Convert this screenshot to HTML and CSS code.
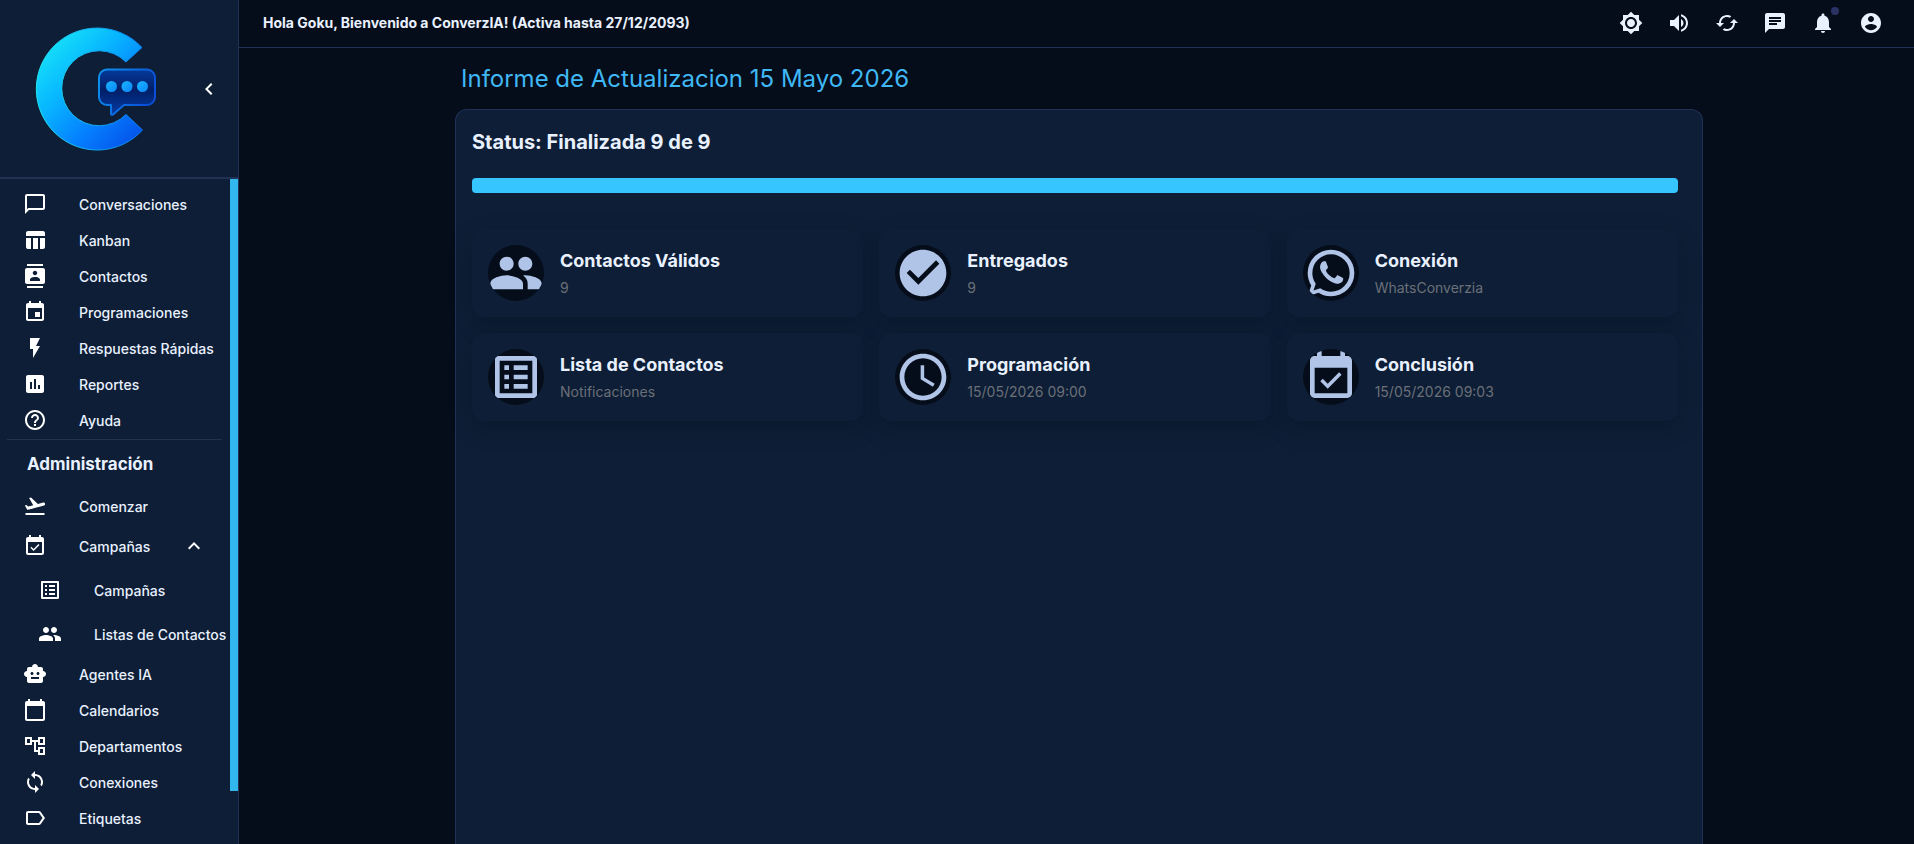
FILE: index.html
```html
<!DOCTYPE html>
<html lang="es">
<head>
    <meta charset="UTF-8">
    <meta name="viewport" content="width=device-width, initial-scale=1.0">
    <title>ConverzIA - Informe</title>
    <link rel="stylesheet" href="styles.css">
</head>
<body>
    <div class="layout">
        <aside class="sidebar">
            <div class="brand">
                <svg class="logo" viewBox="0 0 120 126" role="img" aria-label="ConverzIA">
                    <defs>
                        <linearGradient id="ring" x1="0" y1="0" x2="0.9" y2="1">
                            <stop offset="0" stop-color="#1cf3f5"/>
                            <stop offset="0.4" stop-color="#08b8ff"/>
                            <stop offset="0.7" stop-color="#0580ff"/>
                            <stop offset="1" stop-color="#0450e8"/>
                        </linearGradient>
                        <linearGradient id="edge" x1="0" y1="0" x2="1" y2="0">
                            <stop offset="0" stop-color="#1fe8ee"/>
                            <stop offset="1" stop-color="#0a78f0"/>
                        </linearGradient>
                        <linearGradient id="bubbleEdge" x1="0" y1="0" x2="1" y2="0.4">
                            <stop offset="0" stop-color="#0d96f0"/>
                            <stop offset="1" stop-color="#0a4fd8"/>
                        </linearGradient>
                        <linearGradient id="bubble" x1="0" y1="0" x2="0" y2="1">
                            <stop offset="0" stop-color="#053a9c"/>
                            <stop offset="0.45" stop-color="#021f66"/>
                            <stop offset="1" stop-color="#043ba6"/>
                        </linearGradient>
                        <linearGradient id="dot" x1="0" y1="0" x2="1" y2="1">
                            <stop offset="0" stop-color="#1ab6ff"/>
                            <stop offset="1" stop-color="#0a86fa"/>
                        </linearGradient>
                    </defs>
                    <path fill="url(#ring)" stroke="url(#edge)" stroke-width="1" stroke-linejoin="round" d="M104 21.500A61 61 0 1 0 104.500 104L88 88.500A37.500 37.500 0 1 1 88 36Z"/>
                    <path fill="url(#bubble)" stroke="url(#bubbleEdge)" stroke-width="2" stroke-linejoin="round" d="M69 43.500H109a8 8 0 0 1 8 8V71a8 8 0 0 1-8 8H86L75 88.500q-2 1-2-1V79H69a8 8 0 0 1-8-8V51.500a8 8 0 0 1 8-8Z"/>
                    <circle fill="url(#dot)" cx="73.500" cy="60.500" r="5.500"/>
                    <circle fill="url(#dot)" cx="89" cy="60.500" r="5.500"/>
                    <circle fill="url(#dot)" cx="104.500" cy="60.500" r="5.500"/>
                </svg>
                <button class="icon-button" type="button" aria-label="Contraer menú">
                    <svg class="icon" viewBox="0 0 24 24"><path d="M15.410 7.410 14 6l-6 6 6 6 1.410-1.410L10.830 12z"/></svg>
                </button>
            </div>

            <div class="menu-wrap">
            <nav class="menu">
                <a class="menu-item" href="#">
                    <svg class="icon" viewBox="0 0 24 24"><path d="M20 2H4c-1.100 0-2 .9-2 2v18l4-4h14c1.100 0 2-.9 2-2V4c0-1.100-.9-2-2-2m0 14H5.170L4 17.170V4h16z"/></svg>
                    <span>Conversaciones</span>
                </a>
                <a class="menu-item" href="#">
                    <svg class="icon" viewBox="0 0 24 24"><path d="M10 10.020h5V21h-5zM17 21h3c1.100 0 2-.9 2-2v-9h-5zm3-18H5c-1.100 0-2 .9-2 2v3h19V5c0-1.100-.9-2-2-2M3 19c0 1.100.9 2 2 2h3V10H3z"/></svg>
                    <span>Kanban</span>
                </a>
                <a class="menu-item" href="#">
                    <svg class="icon" viewBox="0 0 24 24"><path d="M20 0H4v2h16zM4 24h16v-2H4zM20 4H4c-1.100 0-2 .9-2 2v12c0 1.100.9 2 2 2h16c1.100 0 2-.9 2-2V6c0-1.100-.9-2-2-2m-8 2.750c1.240 0 2.250 1.010 2.250 2.250s-1.010 2.250-2.250 2.250S9.750 10.240 9.750 9 10.760 6.750 12 6.750M17 17H7v-1.500c0-1.670 3.330-2.500 5-2.500s5 .83 5 2.500z"/></svg>
                    <span>Contactos</span>
                </a>
                <a class="menu-item" href="#">
                    <svg class="icon" viewBox="0 0 24 24"><path d="M17 12h-5v5h5zM16 1v2H8V1H6v2H5c-1.110 0-1.990.9-1.990 2L3 19c0 1.100.89 2 2 2h14c1.100 0 2-.9 2-2V5c0-1.100-.9-2-2-2h-1V1zm3 18H5V8h14z"/></svg>
                    <span>Programaciones</span>
                </a>
                <a class="menu-item" href="#">
                    <svg class="icon" viewBox="0 0 24 24"><path d="M7 2v11h3v9l7-12h-4l4-8z"/></svg>
                    <span>Respuestas Rápidas</span>
                </a>
                <a class="menu-item" href="#">
                    <svg class="icon" viewBox="0 0 24 24"><path d="M19 3H5c-1.100 0-2 .9-2 2v14c0 1.100.9 2 2 2h14c1.100 0 2-.9 2-2V5c0-1.100-.9-2-2-2M9 17H7v-7h2zm4 0h-2V7h2zm4 0h-2v-4h2z"/></svg>
                    <span>Reportes</span>
                </a>
                <a class="menu-item" href="#">
                    <svg class="icon" viewBox="0 0 24 24"><path d="M11 18h2v-2h-2zm1-16C6.480 2 2 6.480 2 12s4.480 10 10 10 10-4.480 10-10S17.520 2 12 2m0 18c-4.410 0-8-3.590-8-8s3.590-8 8-8 8 3.590 8 8-3.590 8-8 8m0-14c-2.210 0-4 1.790-4 4h2c0-1.100.9-2 2-2s2 .9 2 2c0 2-3 1.750-3 5h2c0-2.250 3-2.500 3-5 0-2.210-1.790-4-4-4"/></svg>
                    <span>Ayuda</span>
                </a>

                <hr class="divider">
                <h2 class="menu-title">Administración</h2>

                <a class="menu-item" href="#">
                    <svg class="icon" viewBox="0 0 24 24"><path d="M2.500 19h19v2h-19zm19.570-9.360c-.21-.8-1.040-1.280-1.840-1.060L14.920 10l-6.900-6.430-1.930.51 4.140 7.170-4.970 1.330-1.970-1.540-1.450.39 2.590 4.490s7.120-1.900 16.570-4.430c.81-.23 1.280-1.050 1.070-1.850"/></svg>
                    <span>Comenzar</span>
                </a>
                <button class="menu-item tall" type="button" aria-expanded="true">
                    <svg class="icon" viewBox="0 0 24 24"><path d="M16.530 11.060 15.470 10l-4.880 4.880-2.120-2.120-1.060 1.060L10.590 17zM19 3h-1V1h-2v2H8V1H6v2H5c-1.110 0-1.990.9-1.990 2L3 19c0 1.100.89 2 2 2h14c1.100 0 2-.9 2-2V5c0-1.100-.9-2-2-2m0 16H5V8h14z"/></svg>
                    <span>Campañas</span>
                    <svg class="icon chevron" viewBox="0 0 24 24"><path d="m12 8-6 6 1.410 1.410L12 10.830l4.590 4.580L18 14z"/></svg>
                </button>
                <div class="submenu">
                    <a class="menu-item tall" href="#">
                        <svg class="icon" viewBox="0 0 24 24"><path d="M19 5v14H5V5zm1.100-2H3.900c-.5 0-.9.4-.9.9v16.200c0 .4.4.9.9.9h16.200c.4 0 .9-.5.9-.9V3.900c0-.5-.5-.9-.9-.9M11 7h6v2h-6zm0 4h6v2h-6zm0 4h6v2h-6zM7 7h2v2H7zm0 4h2v2H7zm0 4h2v2H7z"/></svg>
                        <span>Campañas</span>
                    </a>
                    <a class="menu-item tall" href="#">
                        <svg class="icon" viewBox="0 0 24 24"><path d="M16 11c1.660 0 2.990-1.340 2.990-3S17.660 5 16 5s-3 1.340-3 3 1.340 3 3 3m-8 0c1.660 0 2.990-1.340 2.990-3S9.660 5 8 5 5 6.340 5 8s1.340 3 3 3m0 2c-2.330 0-7 1.170-7 3.500V19h14v-2.500c0-2.330-4.670-3.500-7-3.500m8 0c-.29 0-.62.020-.97.050 1.160.84 1.970 1.970 1.970 3.450V19h6v-2.500c0-2.330-4.670-3.500-7-3.500"/></svg>
                        <span>Listas de Contactos</span>
                    </a>
                </div>
                <a class="menu-item" href="#">
                    <svg class="icon" viewBox="0 0 24 24"><path d="M20 9V7c0-1.100-.9-2-2-2h-3c0-1.660-1.340-3-3-3S9 3.340 9 5H6c-1.100 0-2 .9-2 2v2c-1.660 0-3 1.340-3 3s1.340 3 3 3v4c0 1.100.9 2 2 2h12c1.100 0 2-.9 2-2v-4c1.660 0 3-1.340 3-3s-1.340-3-3-3M7.500 11.500c0-.83.67-1.500 1.500-1.500s1.500.67 1.500 1.500S9.830 13 9 13s-1.500-.67-1.500-1.500M16 17H8v-2h8zm-1-4c-.83 0-1.500-.67-1.500-1.500S14.170 10 15 10s1.500.67 1.500 1.500S15.830 13 15 13"/></svg>
                    <span>Agentes IA</span>
                </a>
                <a class="menu-item" href="#">
                    <svg class="icon" viewBox="0 0 24 24"><path d="M20 3h-1V1h-2v2H7V1H5v2H4c-1.100 0-2 .9-2 2v16c0 1.100.9 2 2 2h16c1.100 0 2-.9 2-2V5c0-1.100-.9-2-2-2m0 18H4V8h16z"/></svg>
                    <span>Calendarios</span>
                </a>
                <a class="menu-item" href="#">
                    <svg class="icon" viewBox="0 0 24 24"><path d="M22 11V3h-7v3H9V3H2v8h7V8h2v10h4v3h7v-8h-7v3h-2V8h2v3zM7 9H4V5h3zm10 6h3v4h-3zm0-10h3v4h-3z"/></svg>
                    <span>Departamentos</span>
                </a>
                <a class="menu-item" href="#">
                    <svg class="icon" viewBox="0 0 24 24"><path d="M12 4V1L8 5l4 4V6c3.310 0 6 2.690 6 6 0 1.010-.25 1.970-.7 2.800l1.460 1.460C19.540 15.030 20 13.570 20 12c0-4.420-3.580-8-8-8m0 14c-3.310 0-6-2.690-6-6 0-1.010.25-1.970.7-2.800L5.240 7.740C4.460 8.970 4 10.430 4 12c0 4.420 3.580 8 8 8v3l4-4-4-4z"/></svg>
                    <span>Conexiones</span>
                </a>
                <a class="menu-item" href="#">
                    <svg class="icon" viewBox="0 0 24 24"><path d="M17.630 5.840C17.270 5.330 16.670 5 16 5L5 5.010C3.900 5.010 3 5.900 3 7v10c0 1.100.9 1.990 2 1.990L16 19c.67 0 1.270-.33 1.630-.84L22 12zM16 17H5V7h11l3.550 5z"/></svg>
                    <span>Etiquetas</span>
                </a>
            </nav>
            <div class="scroll-track"><div class="scroll-thumb"></div></div>
            </div>
        </aside>

        <div class="content">
            <header class="topbar">
                <p class="welcome">Hola Goku, Bienvenido a ConverzIA! (Activa hasta 27/12/2093)</p>
                <div class="actions">
                    <button class="icon-button" type="button" aria-label="Tema">
                        <svg class="icon" viewBox="0 0 24 24"><path d="M20 8.690V4h-4.690L12 .69 8.690 4H4v4.690L.69 12 4 15.310V20h4.690L12 23.310 15.310 20H20v-4.690L23.310 12zM12 18c-3.310 0-6-2.690-6-6s2.690-6 6-6 6 2.690 6 6-2.690 6-6 6m0-10c-2.210 0-4 1.790-4 4s1.790 4 4 4 4-1.790 4-4-1.790-4-4-4"/></svg>
                    </button>
                    <button class="icon-button" type="button" aria-label="Volumen">
                        <svg class="icon" viewBox="0 0 24 24"><path d="M3 9v6h4l5 5V4L7 9zm13.500 3c0-1.770-1.020-3.290-2.500-4.030v8.050c1.480-.73 2.500-2.250 2.500-4.020M14 3.230v2.060c2.890.86 5 3.540 5 6.710s-2.110 5.850-5 6.710v2.060c4.010-.91 7-4.490 7-8.770s-2.990-7.860-7-8.770"/></svg>
                    </button>
                    <button class="icon-button" type="button" aria-label="Actualizar">
                        <svg class="icon" viewBox="0 0 24 24"><path d="m19 8-4 4h3c0 3.310-2.690 6-6 6-1.010 0-1.970-.25-2.800-.7l-1.460 1.460C8.970 19.540 10.430 20 12 20c4.420 0 8-3.580 8-8h3zM6 12c0-3.310 2.690-6 6-6 1.010 0 1.970.25 2.800.7l1.460-1.460C15.030 4.460 13.570 4 12 4c-4.420 0-8 3.580-8 8H1l4 4 4-4z"/></svg>
                    </button>
                    <button class="icon-button" type="button" aria-label="Mensajes">
                        <svg class="icon" viewBox="0 0 24 24"><path d="M20 2H4c-1.100 0-1.990.9-1.990 2L2 22l4-4h14c1.100 0 2-.9 2-2V4c0-1.100-.9-2-2-2M6 9h12v2H6zm8 5H6v-2h8zm4-6H6V6h12z"/></svg>
                    </button>
                    <button class="icon-button" type="button" aria-label="Notificaciones">
                        <svg class="icon" viewBox="0 0 24 24"><path d="M12 22c1.100 0 2-.9 2-2h-4c0 1.100.89 2 2 2m6-6v-5c0-3.070-1.640-5.640-4.500-6.320V4c0-.83-.67-1.500-1.500-1.500s-1.500.67-1.500 1.500v.68C7.630 5.360 6 7.920 6 11v5l-2 2v1h16v-1z"/></svg>
                        <span class="badge"></span>
                    </button>
                    <button class="icon-button" type="button" aria-label="Cuenta">
                        <svg class="icon" viewBox="0 0 24 24"><path d="M12 2C6.480 2 2 6.480 2 12s4.480 10 10 10 10-4.480 10-10S17.520 2 12 2m0 3c1.660 0 3 1.340 3 3s-1.340 3-3 3-3-1.340-3-3 1.340-3 3-3m0 14.200c-2.500 0-4.710-1.280-6-3.220.030-1.990 4-3.080 6-3.080 1.990 0 5.970 1.090 6 3.080-1.290 1.940-3.500 3.220-6 3.220"/></svg>
                    </button>
                </div>
            </header>

            <main class="main">
                <div class="container">
                    <h1 class="page-title">Informe de Actualizacion 15 Mayo 2026</h1>
                    <section class="report">
                        <h2 class="status">Status: Finalizada 9 de 9</h2>
                        <progress class="progress" value="9" max="9" aria-label="Progreso"></progress>

                        <div class="cards">
                            <div class="card">
                                <svg class="avatar" viewBox="0 0 24 24"><path d="M16 11c1.660 0 2.990-1.340 2.990-3S17.660 5 16 5s-3 1.340-3 3 1.340 3 3 3m-8 0c1.660 0 2.990-1.340 2.990-3S9.660 5 8 5 5 6.340 5 8s1.340 3 3 3m0 2c-2.330 0-7 1.170-7 3.500V19h14v-2.500c0-2.330-4.670-3.500-7-3.500m8 0c-.29 0-.62.020-.97.050 1.160.84 1.970 1.970 1.970 3.450V19h6v-2.500c0-2.330-4.670-3.500-7-3.500"/></svg>
                                <div>
                                    <h3 class="card-title">Contactos Válidos</h3>
                                    <p class="card-text">9</p>
                                </div>
                            </div>
                            <div class="card">
                                <svg class="avatar" viewBox="0 0 24 24"><path d="M12 2C6.480 2 2 6.480 2 12s4.480 10 10 10 10-4.480 10-10S17.520 2 12 2m-2 15-5-5 1.410-1.410L10 14.170l7.590-7.590L19 8z"/></svg>
                                <div>
                                    <h3 class="card-title">Entregados</h3>
                                    <p class="card-text">9</p>
                                </div>
                            </div>
                            <div class="card">
                                <svg class="avatar" viewBox="0 0 24 24"><path d="M16.750 13.960c.25.130.41.200.46.300.060.110.040.610-.21 1.180-.2.560-1.240 1.100-1.700 1.120-.46.020-.47.360-2.960-.73-2.490-1.090-3.990-3.750-4.110-3.920-.12-.17-.96-1.380-.92-2.610.050-1.220.69-1.800.95-2.040.24-.26.51-.29.68-.26h.47c.15 0 .36-.060.55.450l.69 1.870c.060.130.1.280.010.440l-.27.410-.39.420c-.12.120-.26.250-.12.500.12.260.62 1.090 1.320 1.780.91.880 1.710 1.170 1.950 1.300.24.140.39.120.54-.040l.81-.94c.19-.25.35-.19.580-.11zM12 2a10 10 0 0 1 10 10 10 10 0 0 1-10 10c-1.970 0-3.800-.57-5.350-1.550L2 22l1.550-4.650A9.970 9.970 0 0 1 2 12 10 10 0 0 1 12 2m0 2a8 8 0 0 0-8 8c0 1.720.54 3.310 1.460 4.610L4.500 19.500l2.890-.96A7.950 7.950 0 0 0 12 20a8 8 0 0 0 8-8 8 8 0 0 0-8-8"/></svg>
                                <div>
                                    <h3 class="card-title">Conexión</h3>
                                    <p class="card-text">WhatsConverzia</p>
                                </div>
                            </div>
                            <div class="card">
                                <svg class="avatar" viewBox="0 0 24 24"><path d="M19 5v14H5V5zm1.100-2H3.900c-.5 0-.9.4-.9.9v16.200c0 .4.4.9.9.9h16.200c.4 0 .9-.5.9-.9V3.900c0-.5-.5-.9-.9-.9M11 7h6v2h-6zm0 4h6v2h-6zm0 4h6v2h-6zM7 7h2v2H7zm0 4h2v2H7zm0 4h2v2H7z"/></svg>
                                <div>
                                    <h3 class="card-title">Lista de Contactos</h3>
                                    <p class="card-text">Notificaciones</p>
                                </div>
                            </div>
                            <div class="card">
                                <svg class="avatar" viewBox="0 0 24 24"><path d="M11.990 2C6.470 2 2 6.480 2 12s4.470 10 9.990 10C17.520 22 22 17.520 22 12S17.520 2 11.990 2M12 20c-4.420 0-8-3.580-8-8s3.580-8 8-8 8 3.580 8 8-3.580 8-8 8m.5-13H11v6l5.250 3.150.75-1.230-4.500-2.670z"/></svg>
                                <div>
                                    <h3 class="card-title">Programación</h3>
                                    <p class="card-text">15/05/2026 09:00</p>
                                </div>
                            </div>
                            <div class="card">
                                <svg class="avatar" viewBox="0 0 24 24"><path d="M16.530 11.060 15.470 10l-4.880 4.880-2.120-2.120-1.060 1.060L10.590 17zM19 3h-1V1h-2v2H8V1H6v2H5c-1.110 0-1.990.9-1.990 2L3 19c0 1.100.89 2 2 2h14c1.100 0 2-.9 2-2V5c0-1.100-.9-2-2-2m0 16H5V8h14z"/></svg>
                                <div>
                                    <h3 class="card-title">Conclusión</h3>
                                    <p class="card-text">15/05/2026 09:03</p>
                                </div>
                            </div>
                        </div>
                    </section>
                </div>
            </main>
        </div>
    </div>
</body>
</html>
```
FILE: styles.css
```css
:root {
    --background: #060d1a;
    --paper: #0d1e36;
    --border: #1f3256;
    --primary: #36c5ff;
    --text: #e9f1ff;
    --muted: #6b7078;
    --icon: #b0c4e8;
}

* {
    box-sizing: border-box;
    margin: 0;
    padding: 0;
}

body {
    font-family: Inter, "Liberation Sans", sans-serif;
    font-size: 14px;
    color: var(--text);
    background: var(--background);
}

.layout {
    display: flex;
    height: 100vh;
    overflow: hidden;
}

.icon {
    width: 24px;
    height: 24px;
    fill: currentColor;
    flex-shrink: 0;
}

.icon-button {
    position: relative;
    display: flex;
    padding: 12px;
    border: 0;
    background: none;
    color: inherit;
    cursor: pointer;
}

/* Sidebar */
.sidebar {
    display: flex;
    flex-direction: column;
    flex-shrink: 0;
    width: 239px;
    background: var(--paper);
    border-right: 1px solid var(--border);
}

.brand {
    display: flex;
    align-items: center;
    justify-content: space-between;
    height: 179px;
    padding-left: 38px;
    padding-right: 5px;
    border-bottom: 2px solid #203354;
    color: #fff;
}

.logo {
    width: 120px;
    height: 126px;
    overflow: visible;
}

.menu-wrap {
    display: flex;
    flex: 1;
    min-height: 0;
}

.menu {
    flex: 1;
    min-width: 0;
    padding: 7px 8px 62px 7px;
    overflow-x: hidden;
    overflow-y: auto;
    scrollbar-width: none;
}

.scroll-track {
    width: 8px;
}

.scroll-thumb {
    height: 92%;
    background: #31b6ee;
}

.menu-item {
    display: flex;
    align-items: center;
    gap: 32px;
    width: 100%;
    height: 36px;
    padding: 0 16px;
    border: 0;
    background: none;
    color: var(--text);
    font: inherit;
    font-weight: 500;
    white-space: nowrap;
    text-decoration: none;
    cursor: pointer;
}

.menu-item .icon {
    color: #fff;
}

.menu-item .chevron {
    margin-left: auto;
}

.menu-item.tall {
    height: 44px;
}

.submenu {
    padding-left: 15px;
}

.divider {
    margin-top: 1px;
    border: 0;
    border-top: 1px solid #22324c;
}

.menu-title {
    padding-left: 20px;
    font-size: 17px;
    font-weight: 700;
    line-height: 48px;
}

/* Top bar */
.content {
    display: flex;
    flex-direction: column;
    flex: 1;
    min-width: 0;
}

.topbar {
    display: flex;
    align-items: center;
    justify-content: space-between;
    height: 48px;
    padding: 0 19px 2px 24px;
    border-bottom: 1px solid var(--border);
}

.welcome {
    font-weight: 700;
}

.actions {
    display: flex;
}

.badge {
    position: absolute;
    top: 8px;
    right: 8px;
    width: 8px;
    height: 8px;
    border-radius: 50%;
    background: #2a3263;
}

/* Report */
.main {
    display: flex;
    flex: 1;
    min-height: 0;
    padding-left: 5px;
    overflow: hidden;
}

.container {
    display: flex;
    flex-direction: column;
    width: 100%;
    max-width: 1248px;
    margin: 0 auto;
}

.page-title {
    padding: 0 6px;
    color: #3fb8f5;
    font-size: 24px;
    font-weight: 400;
    line-height: 61px;
}

.report {
    flex: 1;
    padding: 16px 24px 16px 16px;
    border: 1px solid var(--border);
    border-bottom: 0;
    border-radius: 12px 12px 0 0;
    background: var(--paper);
}

.status {
    font-size: 20px;
    font-weight: 700;
    line-height: 32px;
}

.progress {
    display: block;
    width: 100%;
    height: 15px;
    margin: 20px 0 36px;
    border: 0;
    border-radius: 4px;
    overflow: hidden;
    appearance: none;
    background: #12385a;
}

.progress::-webkit-progress-bar {
    background: #12385a;
}

.progress::-webkit-progress-value {
    background: var(--primary);
}

.cards {
    display: grid;
    grid-template-columns: repeat(auto-fit, minmax(320px, 1fr));
    gap: 16px;
}

.card {
    display: flex;
    align-items: center;
    gap: 16px;
    padding: 16px;
    border-radius: 12px;
    background: var(--paper);
    box-shadow: 0 8px 24px rgba(0, 0, 0, 0.18);
}

.avatar {
    width: 56px;
    height: 56px;
    border-radius: 50%;
    background: var(--background);
    fill: var(--icon);
}

.card-title {
    font-size: 18px;
    font-weight: 700;
    line-height: 30px;
}

.card-text {
    color: var(--muted);
    font-size: 14px;
    line-height: 24px;
}
```
